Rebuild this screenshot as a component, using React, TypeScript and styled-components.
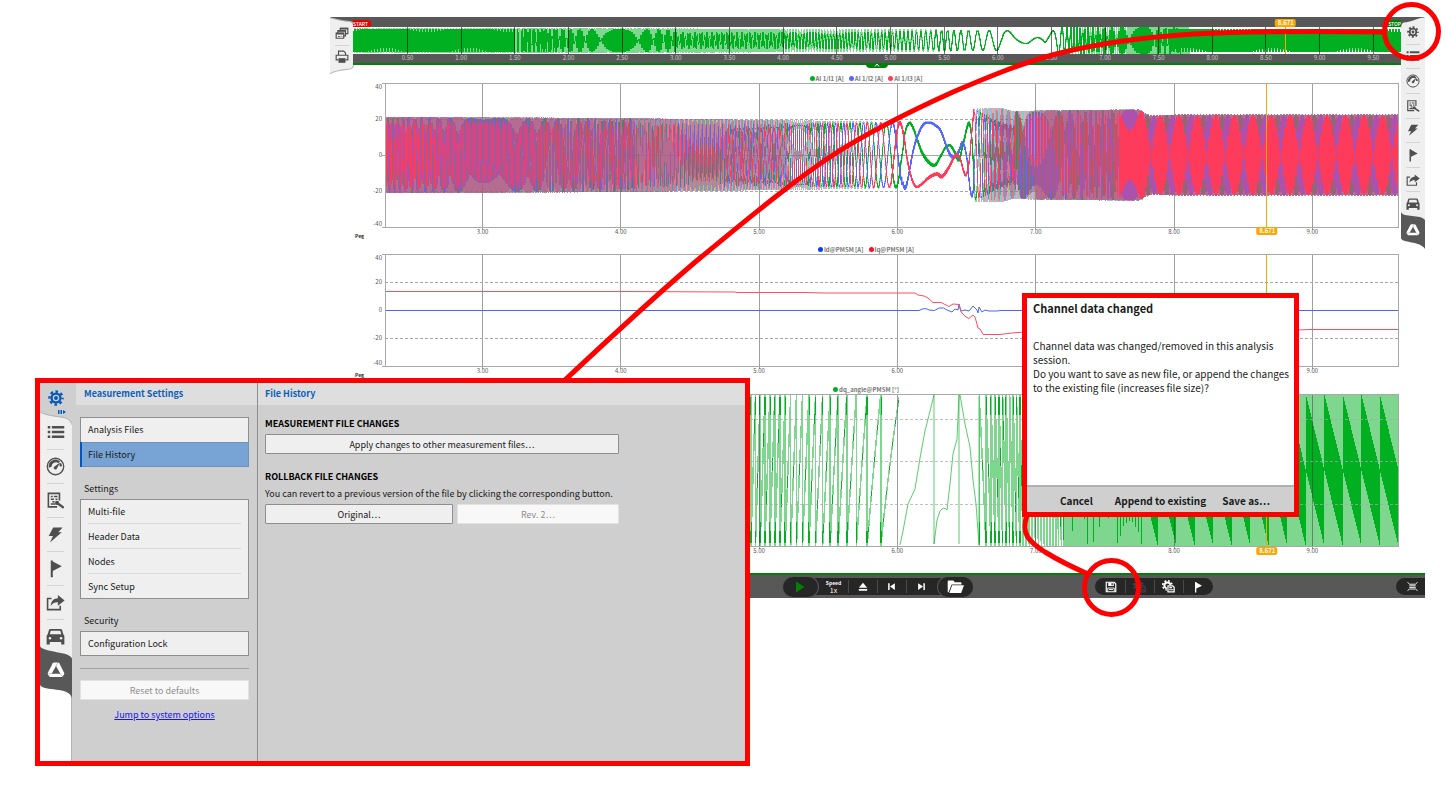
import React from "react";
import styled, { createGlobalStyle, css } from "styled-components";

const FONT = '"Noto Sans CJK SC", "Noto Sans", sans-serif';

const C = {
  red: "#ff0000",
  bar: "#585858",
  ink: "#4f4f4f",
  panel: "#cfcfcf",
  head: "#dedede",
  tile: "#efefef",
  line: "#8e8e8e",
  blue: "#0f5fbb",
  green: "#00b020",
  darkGreen: "#008008",
  cursor: "#ffa500",
  sigGreen: "#00b020",
  sigBlue: "#5468ff",
  sigRed: "#ff3b5c",
};

const GlobalStyle = createGlobalStyle`
  *, *::before, *::after { box-sizing: border-box; }
  body { margin: 0; background: #fff; font-family: ${FONT}; color: #1a1a1a; }
  button { font: inherit; color: inherit; border: 0; padding: 0; margin: 0; background: none; cursor: pointer; }
  svg { display: block; }
`;

/* ---------- signal model ---------- */

type Pt = [number, number];

const lerp = (table: Pt[], x: number) => {
  if (x <= table[0][0]) return table[0][1];
  for (let i = 1; i < table.length; i++) {
    if (x <= table[i][0]) {
      const [x0, y0] = table[i - 1];
      const [x1, y1] = table[i];
      return y0 + ((y1 - y0) * (x - x0)) / (x1 - x0);
    }
  }
  return table[table.length - 1][1];
};

const smooth = (p: Pt[], x: number) => {
  let i = 1;
  while (i < p.length - 1 && x > p[i][0]) i++;
  const a = p[Math.max(0, i - 2)];
  const b = p[i - 1];
  const c = p[i];
  const d = p[Math.min(p.length - 1, i + 1)];
  const w = c[0] - b[0];
  const u = Math.min(1, Math.max(0, (x - b[0]) / w));
  const m0 = ((c[1] - a[1]) / (c[0] - a[0])) * w;
  const m1 = ((d[1] - b[1]) / (d[0] - b[0])) * w;
  const u2 = u * u;
  const u3 = u2 * u;
  return (2 * u3 - 3 * u2 + 1) * b[1] + (u3 - 2 * u2 + u) * m0 + (3 * u2 - 2 * u3) * c[1] + (u3 - u2) * m1;
};

/* electrical frequency in Hz over time in seconds */
const FREQ: Pt[] = [
  [0, 71], [1.2, 71.5], [2.48, 53.6], [3, 46.1], [4.62, 34.6], [4.93, 30.5], [5.14, 27], [5.33, 21.8],
  [5.48, 18.7], [5.6, 16], [5.74, 12.9], [5.83, 10.1], [6, 6.1], [6.09, 4], [6.4, 4], [6.5, 6.5], [6.54, 9],
  [6.615, 20], [6.66, 28], [6.69, 33], [6.75, 38], [7, 46.1], [7.37, 53.6], [7.6, 66], [7.75, 71.9], [9.9, 71.9],
];
const DT = 0.0005;
const PHASE: number[] = [0];
for (let i = 1; i * DT < 9.95; i++) PHASE.push(PHASE[i - 1] + lerp(FREQ, i * DT) * DT);
const cyc = (t: number) => {
  const k = Math.max(0, Math.min(PHASE.length - 2, t / DT));
  const i = Math.floor(k);
  return PHASE[i] + (PHASE[i + 1] - PHASE[i]) * (k - i);
};

const T0 = 2.295;
const PER_S = 138.3;
const PLOT_W = 1013;
const timeAt = (i: number) => T0 + i / PER_S;
const colAt = (t: number) => (t - T0) * PER_S;

const AMP: Pt[] = [
  [0, 20.6], [2.3, 20.8], [4, 20.2], [4.7, 19.4], [5.5, 18.6], [6.09, 17.8], [6.5, 20], [6.56, 25.4], [6.76, 25.6],
  [6.83, 24], [7.05, 24.4], [7.75, 25], [7.79, 23], [7.83, 21.6], [8.05, 22.2], [9.9, 22.2],
];

/* slow transition through standstill: column, value in ampere */
const zt = (pts: Pt[]): Pt[] => pts.map(([x, y]) => [315 + x / 3, (315 - y) / 5.4]);
const SLOW: Pt[][] = [
  zt([[590, 412], [605, 330], [615, 250], [628, 219], [640, 235], [652, 270], [665, 305], [685, 335], [705, 345], [720, 322], [735, 295], [750, 286], [765, 308], [776, 330], [790, 280], [806, 220], [815, 260], [822, 370], [831, 455]]),
  zt([[578, 218], [590, 260], [600, 350], [613, 413], [622, 395], [640, 300], [658, 245], [672, 222], [690, 218], [705, 225], [722, 242], [740, 290], [752, 316], [765, 320], [776, 305], [788, 278], [800, 320], [810, 415], [817, 436], [826, 350], [836, 180]]),
  zt([[585, 290], [599, 213], [612, 262], [622, 330], [635, 385], [648, 410], [665, 402], [690, 380], [712, 372], [725, 380], [745, 355], [768, 314], [780, 325], [790, 360], [798, 375], [808, 330], [816, 240], [824, 178], [832, 260]]),
];

const current = (ph: number, t: number) => {
  const i = colAt(t);
  const a = lerp(AMP, t);
  if (i > 517 && i < 589) return smooth(SLOW[ph], i);
  if (t < 6.3) return a * Math.cos(2 * Math.PI * (cyc(t) - cyc(6.086) - ph / 3));
  if (t < 7.79) return a * Math.cos(2 * Math.PI * (cyc(t) - cyc(6.5156) + ph / 3));
  return a * Math.cos(2 * Math.PI * (0.527 * (i - 788.3) + (ph - 2) / 3));
};

/* Columns of a decimated signal: the light band is the min/max range, the
   solid one joins neighbouring samples. core() scales the solid part. */
const bars = (
  n: number,
  at: (i: number) => number,
  y: (v: number) => number,
  pad: (i: number) => number,
  core: (i: number) => number,
  reach: (i: number) => number,
) => {
  let solid = "";
  let light = "";
  for (let i = 0; i < n; i++) {
    let lo = Infinity;
    let hi = -Infinity;
    const r = reach(i);
    for (let k = 0; k <= 14; k++) {
      const v = at(i - r + ((1 + 2 * r) * k) / 14);
      lo = Math.min(lo, v);
      hi = Math.max(hi, v);
    }
    const s = core(i);
    const p = pad(i);
    const x = i + 0.5;
    light += `M${x} ${(y(hi) - p - 0.4).toFixed(1)}V${(y(lo) + p + 0.4).toFixed(1)}`;
    if (s > 0) {
      const a = at(i);
      const b = at(i + 1);
      const mid = (a + b) / 2;
      const half = (Math.abs(a - b) / 2) * s;
      solid += `M${x} ${(y(mid + half) - p).toFixed(1)}V${(y(mid - half) + p).toFixed(1)}`;
    }
  }
  return { solid, light };
};

const coreOf = (ph: number, i: number) => {
  const t = timeAt(i);
  if (i > 505 && i < 589) return 1;
  if (t < 2.65) return ph === 2 ? (i % 4 === 3 ? 0 : 0.85) : 1;
  if (t < 3.4) return ph === 2 ? (i % 2 === 0 ? 0.85 : 0) : 1;
  if (t < 4.1) return ph === 2 ? (i % 3 === 0 ? 0.9 : 0) : ph === 1 && i % 3 === 1 ? 0 : 1;
  if (t < 4.75) return ph === 2 ? (i % 4 === 0 ? 0.7 : 0) : ph === 1 ? (i % 4 === 1 ? 0.7 : 0) : i % 2 ? 0.8 : 0;
  if (t < 5.4) return (i + ph) % 3 === 0 ? 0.7 : 0.2;
  if (t < 6.3) return 0.6;
  if (t < 6.85) return 0.4;
  if (t < 7.6) return ph === 2 ? (i % 3 === 0 ? 0.9 : 0) : ph === 1 && i % 3 === 1 ? 0 : 1;
  return 1;
};

const PHASES = [C.sigGreen, C.sigBlue, C.sigRed].map((color, ph) => ({
  color,
  ...bars(
    PLOT_W,
    (i) => current(ph, timeAt(i)),
    (v) => 72 - v * 1.8,
    (i) => (i > 505 && i < 589 ? 1 + (Math.sin(i / 7 + ph * 2) + 1) / 3 : 0.5),
    (i) => coreOf(ph, i),
    (i) => {
      const t = timeAt(i);
      if (t < 4.4 || t > 7) return 0.6;
      return t < 5.2 ? 0.4 : 0.1;
    },
  ),
}));

const OV_W = 1048;
const ovTime = (i: number) => (i - 0.9) / 107.3;
const OVERVIEW = bars(
  OV_W,
  (i) => Math.max(-23, Math.min(23, current(0, Math.min(ovTime(i), 7.78)))),
  (v) => 13.5 - v * 0.55,
  () => 0.4,
  (i) => (ovTime(i) < 1.55 || ovTime(i) > 7.7 ? 0 : ovTime(i) > 3 && ovTime(i) < 5.4 ? 0.7 : 1),
  (i) => (ovTime(i) < 4 || ovTime(i) > 7.2 ? 0.6 : 0.1),
);
/* at both ends the samples fill the whole band, with a beating comb at the edges */
const OVERVIEW_FILL = (() => {
  let d = "";
  for (let i = 0; i < OV_W; i++) {
    const t = ovTime(i);
    if (t > 1.9 && t < 7.6) continue;
    if (t > 1.5 && t < 1.9 && i % 4 > 1) continue;
    const top = i % 3 ? 0 : 3.5 * Math.max(0, Math.cos((2 * Math.PI * (i + (t > 5 ? 45 : 10))) / 84));
    const bot = i % 3 ? 0 : 4.5 * Math.max(0, -Math.cos((2 * Math.PI * (i + (t > 5 ? 48 : 10))) / 84));
    d += `M${i + 0.5} ${(1.8 + top).toFixed(1)}V${(25.2 - bot).toFixed(1)}`;
  }
  return d;
})();

const frac = (v: number) => v - Math.floor(v);
const ANGLE = (() => {
  let light = "";
  let solid = "";
  const H = 152;
  const add = (x: number, a: number, b: number) =>
    `M${x + 0.5} ${(Math.min(a, b) * H).toFixed(1)}V${(Math.max(a, b) * H).toFixed(1)}`;
  const left = cyc(timeAt(514.7));
  const right = cyc(timeAt(594));
  const pos = (i: number) => {
    const t = timeAt(i);
    if (i < 515) return 1 - frac(cyc(t) - left);
    if (t < 7.79) return frac(cyc(t) - right);
    return frac(0.527 * (i - 920.3));
  };
  for (let i = 0; i < PLOT_W; i++) {
    if (i >= 514 && i < 594) continue;
    const t = timeAt(i);
    const r = t > 7.2 ? 0.8 : 0.25;
    let lo = 1;
    let hi = 0;
    for (let k = 0; k <= 12; k++) {
      const v = pos(i - r + ((1 + 2 * r) * k) / 12);
      lo = Math.min(lo, v);
      hi = Math.max(hi, v);
    }
    if (hi - lo > 0.6) {
      lo = 0;
      hi = 1;
    }
    light += add(i, lo, hi);
    if (t < 6.9) {
      if (hi - lo > 0.9) solid += i % 3 ? add(i, 0.02, 0.14) + add(i, 0.9, 0.98) : add(i, 0.84, 0.98);
      else if (i % 3 === 0) solid += add(i, lo * 0.65 + hi * 0.35, lo * 0.35 + hi * 0.65);
    } else if (t > 7.79) {
      const s = frac(0.027 * (i - 920.3) * 2) / 2;
      solid += add(i, s, s + 0.5);
    } else if (i % 3 === 0) solid += add(i, pos(i), pos(i + 1));
  }
  return { light, solid };
})();
const SLOW_ANGLE =
  "M515 151L518 137L523 110L530 95L535 64L540 37L549 1V150L552 126L555 117Q559 112 562 116L565 90L568 60L572 45L574 1V150M575 1L580 30L585 53L588 86L591 110L594 151V2";

/* ---------- icons ---------- */

type IconName =
  | "gear" | "list" | "gauge" | "doc" | "bolt" | "flag" | "share" | "car" | "logo"
  | "stack" | "printer" | "play" | "eject" | "prev" | "next" | "folder" | "save" | "gearSave" | "fit";

const ICONS: Record<IconName, React.ReactNode> = {
  gear: (
    <g fill="none" stroke="currentColor">
      <circle cx="12" cy="12" r="6.6" strokeWidth="3.4" />
      <circle cx="12" cy="12" r="9.8" strokeWidth="3.6" strokeDasharray="3.9 3.797" strokeDashoffset="1.95" />
      <circle cx="12" cy="12" r="2.9" fill="currentColor" stroke="none" />
    </g>
  ),
  list: (
    <path fill="currentColor" d="M1 4h3.4v3.4H1zM1 10.3h3.4v3.4H1zM1 16.6h3.4V20H1zM6.5 4H23v3.4H6.5zM6.5 10.3H23v3.4H6.5zM6.5 16.6H23V20H6.5z" />
  ),
  gauge: (
    <g>
      <circle cx="12" cy="12" r="10.4" fill="none" stroke="currentColor" strokeWidth="1.7" />
      <path fill="currentColor" d="M3.5 13.5A8.6 8.6 0 0 1 17.8 5.6l-2 2A5.6 5.6 0 0 0 7 12.4zM20.3 11.8a8.6 8.6 0 0 0-1.6-4.6l-1.8 2 .5 2.8zM11 15.6a2 2 0 0 1-.6-3.2L18 6.5l-4.400 8.300a2 2 0 0 1-2.600.8z" />
    </g>
  ),
  doc: (
    <g fill="none" stroke="currentColor">
      <path strokeWidth="2" d="M17 12V3H3v17h11" />
      <path strokeWidth="1.8" d="M6 7h2.500M10 7h4.500M6 10.500h4M12 10.500h2.500M6 16.500h6M8 13.500h3" />
      <path strokeWidth="2.800" strokeLinecap="round" d="M14.500 15.500l7 5" />
      <circle cx="14" cy="15" r="2.600" fill="currentColor" stroke="none" />
    </g>
  ),
  bolt: <path fill="currentColor" d="M9 3h12l-5.500 6.300H20L5 22l3.800-8H3.500z" />,
  flag: <path fill="currentColor" d="M6 2h2.600v1L20 9.300 8.600 15v8H6z" />,
  share: (
    <g>
      <path fill="none" stroke="currentColor" strokeWidth="2" d="M7 7H2v14h16v-5" />
      <path fill="currentColor" d="M6 16.500C6.500 9.500 10 6.800 15 6.600V2.500l8.500 7L15 16v-4.200c-4-.1-6.700 1.200-9 4.700z" />
    </g>
  ),
  car: (
    <path
      fill="currentColor"
      fillRule="evenodd"
      d="M5.500 2.500h13c1 0 1.500.5 1.900 1.500L22 9.500c.8.500 1.200 1.200 1.200 2.200V22h-4v-3H4.800v3h-4V11.700c0-1 .4-1.700 1.200-2.200L3.600 4c.4-1 .900-1.500 1.900-1.500zM6 4.800L4.700 9.300h14.600L18 4.800zM5 12.500a1.700 1.700 0 1 0 0 3.400 1.700 1.700 0 0 0 0-3.400zm14 0a1.700 1.700 0 1 0 0 3.400 1.700 1.700 0 0 0 0-3.400z"
    />
  ),
  logo: (
    <g>
      <path fill="#fff" d="M9.200 2h5.600c.8 0 1.200.4 1.600 1l6.400 12.500c.4.800.3 1.300 0 2l-1.500 2.600c-.5.800-1 1.100-1.800 1.100h-15c-.8 0-1.300-.3-1.800-1.100l-1.500-2.600c-.3-.7-.4-1.200 0-2L7.600 3c.4-.6.800-1 1.600-1z" />
      <path fill={C.bar} d="M12 6.600l5.800 10.300H6.200z" />
      <path stroke={C.bar} strokeWidth=".5" d="M12 7l2.500-5M17.500 16.800l3 4M6.500 16.800l-5 .6" />
    </g>
  ),
  stack: (
    <g fill="none" stroke="currentColor" strokeWidth="2">
      <path d="M2 12h13v9H2zM5 12V8h13v9h-3M9 8V4h13v9h-4" />
      <path strokeWidth="3" d="M2 13h13M5 8.500h13M9 4.500h13" />
      <path strokeWidth="1.400" d="M5 18h4M11 18h1.500" />
    </g>
  ),
  printer: (
    <g>
      <path fill="none" stroke="currentColor" strokeWidth="2" d="M6 8V2h9l3 3v3M6 17H2V9h20v8h-4" />
      <path fill="currentColor" d="M6 14h12v8H6z" />
    </g>
  ),
  play: <path fill={C.darkGreen} d="M4 1l17 11L4 23z" />,
  eject: <path fill="currentColor" d="M12 2l10 12H2zM2 17h20v4H2z" />,
  prev: <path fill="currentColor" d="M3 3h4v18H3zM21 3v18L8 12z" />,
  next: <path fill="currentColor" d="M17 3h4v18h-4zM3 3v18l13-9z" />,
  folder: <path fill="currentColor" d="M1 20V5c0-1 .5-1.600 1.500-1.600H9l2 2.600h8c1 0 1.500.6 1.500 1.500V9H6.500L2.300 20zM7.300 10.300H24L20 21H3.300z" />,
  save: (
    <g>
      <path fill="none" stroke="currentColor" strokeWidth="2.400" d="M2.500 2.500h16l3 3v16h-19z" />
      <path fill="currentColor" fillRule="evenodd" d="M6.500 3h11v7h-11zm6.500 1.500v4h2.500v-4z" />
      <path fill="none" stroke="currentColor" strokeWidth="1.800" d="M5.500 21v-7h13v7M8 17h8" />
    </g>
  ),
  gearSave: (
    <g>
      <g fill="none" stroke="currentColor">
        <circle cx="10" cy="10" r="5.500" strokeWidth="3.600" />
        <circle cx="10" cy="10" r="8.600" strokeWidth="3" strokeDasharray="3.500 3.254" />
      </g>
      <path fill="#262626" d="M9 9h15v14H9z" />
      <path fill="none" stroke="currentColor" strokeWidth="2.200" d="M11 11h9l2.500 2.500V22H11zM13 18h8M13.500 14h5" />
    </g>
  ),
  fit: (
    <g fill="none" stroke="currentColor" strokeWidth="2">
      <path d="M5 7h14M5 10.500h14M5 14h14M5 17.500h14" />
      <path strokeWidth="2" d="M1 3l4 3M23 3l-4 3M1 21l4-3M23 21l-4-3" />
    </g>
  ),
};

const Glyph = styled.svg<{ $size: number }>`
  width: ${(p) => p.$size}px;
  height: ${(p) => p.$size}px;
  flex: none;
`;
const Icon = ({ name, size }: { name: IconName; size: number }) => (
  <Glyph $size={size} viewBox="0 0 24 24" aria-hidden="true">
    {ICONS[name]}
  </Glyph>
);

/* ---------- analysis window ---------- */

const Page = styled.main`
  position: relative;
  min-height: 786px;
  padding: 17px 21px 0 330px;
  overflow: hidden;
`;

const Window = styled.section`
  display: grid;
  grid-template-columns: 23px minmax(0, 1fr) 24px;
`;

const Rail = styled.nav<{ $height: number }>`
  display: grid;
  align-self: start;
  height: ${(p) => p.$height}px;
  > * {
    grid-area: 1 / 1;
  }
`;
const RailShape = styled.svg`
  width: 100%;
  height: 100%;
`;
const RailItems = styled.div<{ $bottom: number; $top: number }>`
  display: flex;
  flex-direction: column;
  padding: ${(p) => p.$top}px 5px ${(p) => p.$bottom}px;
`;
const RailButton = styled.button<{ $last?: boolean }>`
  flex: 1;
  min-height: 0;
  display: flex;
  align-items: center;
  justify-content: center;
  color: ${C.ink};
  border-bottom: 1px solid ${(p) => (p.$last ? "transparent" : "#d4d4d4")};
`;
const LogoSpot = styled.div`
  flex: none;
  height: 25px;
  display: flex;
  align-items: center;
  justify-content: center;
`;

const Main = styled.div`
  min-width: 0;
`;

const Overview = styled.div`
  position: relative;
  background: ${C.bar};
  border-bottom: 2px solid ${C.darkGreen};
  height: 48px;
`;
const OverviewHead = styled.div`
  position: relative;
  display: flex;
  justify-content: space-between;
  align-items: flex-end;
  height: 10px;
`;
const EdgeFlag = styled.span<{ $color: string }>`
  height: 7px;
  padding: 0 3px 0 0;
  border-radius: 0 3px 3px 0;
  background: ${(p) => p.$color};
  color: #fff;
  font-size: 5px;
  line-height: 7px;
  font-weight: 500;
  & + & {
    padding: 0 0 0 3px;
    border-radius: 3px 0 0 3px;
  }
`;
const Chart = styled.svg<{ $height: number }>`
  width: 100%;
  height: ${(p) => p.$height}px;
  overflow: visible;
  font-family: ${FONT};
`;
const PullTab = styled.button`
  position: absolute;
  left: 50%;
  top: 46px;
  width: 22px;
  height: 5px;
  margin-left: -11px;
  border-radius: 0 0 4px 4px;
  background: ${C.darkGreen};
  display: flex;
  justify-content: center;
`;

const ChartBlock = styled.figure<{ $top: number }>`
  margin: 0;
  padding: ${(p) => p.$top}px 3px 0 32px;
`;
const Legend = styled.figcaption`
  display: flex;
  justify-content: center;
  gap: 5px;
  height: 9px;
  padding-right: 51px;
  font-size: 6px;
  line-height: 9px;
  font-weight: 700;
  color: #777;
`;
const LegendItem = styled.span<{ $color: string }>`
  display: flex;
  align-items: center;
  gap: 1px;
  &::before {
    content: "";
    width: 5px;
    height: 5px;
    border-radius: 50%;
    background: ${(p) => p.$color};
  }
`;

const pct = (t: number) => `${((colAt(t) / PLOT_W) * 100).toFixed(2)}%`;

const Cursor = ({ h, x, badgeY }: { h: number; x: string; badgeY?: number }) => (
  <svg x={x} y="0" overflow="visible">
    <rect x="-1" y="0" width="1" height={h} fill={C.cursor} shapeRendering="crispEdges" />
    {badgeY !== undefined && (
      <g transform={`translate(0 ${badgeY})`}>
        <rect x="-11" y="0" width="21" height="8" rx="2" fill={C.cursor} />
        <text x="0" y="6" textAnchor="middle" fontSize="6" fontWeight="700" fill="#fff">8.671</text>
      </g>
    )}
  </svg>
);

const Frame = ({ h }: { h: number }) => (
  <g stroke="#a8a8a8" shapeRendering="crispEdges" strokeWidth="1">
    <line x1="-3" x2="100%" y1="0.5" y2="0.5" />
    <line x1="-3" x2="100%" y1={h - 0.5} y2={h - 0.5} />
    <line x1="0.5" x2="0.5" y1="0" y2={h} />
    <line x1="100%" x2="100%" y1="0" y2={h} />
  </g>
);

const SECONDS = [3, 4, 5, 6, 7, 8, 9];
const TimeGrid = ({ h, color, labels = SECONDS }: { h: number; color: string; labels?: number[] }) => (
  <g>
    {SECONDS.map((t) => (
      <line key={t} x1={pct(t)} x2={pct(t)} y1="0" y2={h + 2} stroke={color} shapeRendering="crispEdges" />
    ))}
    {labels.map((t) => (
      <text key={t} x={pct(t)} y={h + 6} textAnchor="middle" fontSize="6" fill="#555">{t.toFixed(2)}</text>
    ))}
  </g>
);

const Levels = ({ ys, solid }: { ys: number[]; solid?: number }) => (
  <g stroke="#a8a8a8" shapeRendering="crispEdges">
    {ys.map((y) => (
      <line key={y} x1={y === solid ? -3 : 0} x2="100%" y1={y} y2={y} strokeDasharray={y === solid ? undefined : "3 2"} />
    ))}
  </g>
);

const Scale = ({ items, h }: { items: [string, number][]; h: number }) => (
  <g fontSize="6" fill="#555" textAnchor="end">
    {items.map(([label, y]) => (
      <text key={label} x="-3" y={y + 2}>{label}</text>
    ))}
    <text x="-21" y={h + 10} fontSize="5" fontWeight="700" fill="#222">Peg</text>
  </g>
);

const Signals = ({ h, children }: { h: number; children: React.ReactNode }) => (
  <svg width="100%" height={h} viewBox={`0 0 ${PLOT_W} ${h}`} preserveAspectRatio="none" fill="none" shapeRendering="crispEdges">
    {children}
  </svg>
);

/* ---------- transport bar ---------- */

const Transport = styled.footer`
  grid-column: 1 / -1;
  display: grid;
  grid-template-columns: minmax(0, 1fr) auto minmax(0, 1fr);
  align-items: center;
  height: 25px;
  margin-top: 26px;
  background: ${C.bar};
  border-top: 2px solid ${C.darkGreen};
  color: #fff;
`;
const Player = styled.div`
  grid-column: 2;
  display: flex;
  align-items: center;
`;
const pill = css`
  background: #262626;
  display: flex;
  align-items: center;
  justify-content: center;
`;
const RoundButton = styled.button`
  ${pill}
  position: relative;
  width: 35px;
  height: 20px;
  border-radius: 10px;
  box-shadow: 0 0 0 1px #555;
`;
const Strip = styled.div`
  ${pill}
  height: 17px;
  padding: 0 10px;
  margin: 0 -8px;
`;
const Tools = styled.div`
  grid-column: 3;
  display: flex;
  justify-content: space-between;
  padding-left: 122px;
`;
const Pill = styled.div`
  ${pill}
  height: 17px;
  padding: 0 0 0 2px;
  border-radius: 9px;
`;
const EndButton = styled.button`
  ${pill}
  width: 29px;
  height: 17px;
  padding-left: 4px;
  border-radius: 9px 0 0 9px;
`;
const BarButton = styled.button`
  display: flex;
  flex-direction: column;
  align-items: center;
  justify-content: center;
  width: 29px;
  height: 13px;
  border-right: 1px solid #4a4a4a;
  color: #fff;
  font-size: 7px;
  line-height: 8px;
  &:last-child {
    border-right: 0;
  }
  &:disabled {
    color: #444;
  }
`;
const Tiny = styled.small`
  font-size: 5px;
  line-height: 7px;
  font-weight: 700;
`;

/* ---------- settings call-out ---------- */

const Settings = styled.section`
  position: absolute;
  left: 35px;
  top: 378px;
  width: 715px;
  min-height: 388px;
  display: grid;
  grid-template-columns: 32px 186px minmax(0, 1fr);
  border: 5px solid ${C.red};
  background: ${C.panel};
  font-size: 9px;
  line-height: 14px;
`;
const SideRail = styled.nav`
  display: grid;
  align-content: start;
  background: #fff;
  border-right: 1px solid #b4b4b4;
  > * {
    grid-area: 1 / 1;
  }
`;
const SideShape = styled.svg`
  width: 32px;
  height: 320px;
`;
const SideItems = styled.div`
  display: flex;
  flex-direction: column;
`;
const SideButton = styled.button<{ $plain?: boolean; $active?: boolean }>`
  position: relative;
  height: ${(p) => (p.$active ? 33 : 34)}px;
  padding-bottom: ${(p) => (p.$active ? 3 : 2)}px;
  padding-right: 1px;
  display: flex;
  align-items: center;
  justify-content: center;
  color: ${(p) => (p.$active ? "#0558b8" : C.ink)};
  &::after {
    content: "";
    position: absolute;
    left: 7px;
    right: 8px;
    bottom: 0;
    height: ${(p) => (p.$plain || p.$active ? 0 : 1)}px;
    background: #d4d4d4;
  }
`;
const ActiveMark = styled.svg`
  position: absolute;
  right: 6px;
  bottom: 2px;
  width: 8px;
  height: 4px;
`;

const Column = styled.div<{ $divided?: boolean }>`
  border-right: ${(p) => (p.$divided ? `1px solid ${C.line}` : 0)};
`;
const Head = styled.h2<{ $inset?: boolean }>`
  margin: 0 0 0 ${(p) => (p.$inset ? 4 : 0)}px;
  height: 22px;
  padding: 0 ${(p) => (p.$inset ? 8 : 7)}px;
  background: ${C.head};
  color: ${C.blue};
  font-size: 9px;
  line-height: 21px;
  font-weight: 700;
`;
const NavBody = styled.div`
  padding: 12px 8px 0;
`;
const NavGroup = styled.div`
  outline: 1px solid ${C.line};
  outline-offset: -1px;
  background: ${C.tile};
`;
const NavItem = styled.button<{ $on?: boolean }>`
  position: relative;
  display: block;
  width: 100%;
  height: 25px;
  padding: 0 8px;
  text-align: left;
  line-height: 25px;
  background: ${(p) => (p.$on ? "#78a4d5" : "transparent")};
  box-shadow: ${(p) => (p.$on ? "inset 2px 0 0 #0558b8, inset 0 0 0 1px #6d93bd" : "none")};
  &:not(:last-child)::after {
    content: "";
    position: absolute;
    left: 8px;
    right: 8px;
    bottom: 0;
    height: 1px;
    background: #d8d8d8;
  }
  &:has(+ [aria-current])::after {
    display: none;
  }
`;
const NavLabel = styled.h3`
  margin: 15px 4px 3px;
  font-size: 9px;
  line-height: 14px;
  font-weight: 400;
`;
const Rule = styled.hr`
  border: 0;
  height: 1px;
  margin: 12px 0 11px;
  background: #a0a0a0;
`;
const PanelButton = styled.button`
  width: 100%;
  height: 20px;
  border: 1px solid ${C.line};
  border-radius: 1px;
  background: ${C.tile};
  line-height: 17px;
  &:disabled {
    background: #f8f8f8;
    border-color: #e2e2e2;
    color: #909090;
  }
`;
const JumpLink = styled.a`
  display: block;
  margin-top: 8px;
  text-align: center;
  color: #1414f0;
`;
const Content = styled.div`
  padding: 12px 0 0 7px;
  width: 361px;
`;
const Title = styled.h3`
  margin: 0;
  font-size: 9px;
  line-height: 14px;
  font-weight: 700;
  color: #000;
`;
const Note = styled.p`
  margin: 3px 0;
  white-space: nowrap;
`;
const Stack = styled.div`
  padding-top: 3px;
  margin-bottom: 16px;
`;
const Pair = styled.div`
  display: grid;
  grid-template-columns: 188px 1fr;
  gap: 4px;
`;

/* ---------- dialog call-out ---------- */

const Dialog = styled.section`
  position: absolute;
  right: 147px;
  top: 293px;
  width: 277px;
  height: 224px;
  display: flex;
  flex-direction: column;
  border: 5px solid ${C.red};
  background: #fff;
`;
const DialogTitle = styled.h2`
  margin: 0;
  padding: 1px 6px 0;
  font-size: 11px;
  line-height: 18px;
  font-weight: 700;
`;
const DialogText = styled.p`
  flex: 1;
  margin: 0;
  padding: 22px 0 0 6px;
  font-size: 10px;
  line-height: 14px;
`;
const DialogActions = styled.div`
  display: flex;
  justify-content: flex-end;
  gap: 16px;
  height: 27px;
  padding: 2px 24px 0 0;
  border-top: 2px solid #b0b0b0;
  background: ${C.panel};
  font-size: 10px;
  font-weight: 700;
  button:first-child {
    margin-right: 6px;
  }
`;

const Lines = styled.svg`
  position: absolute;
  left: 0;
  top: 0;
  width: 100%;
  height: 786px;
  pointer-events: none;
`;
const Ring = styled.div<{ $top: number; $right: number }>`
  position: absolute;
  top: ${(p) => p.$top}px;
  right: ${(p) => p.$right}px;
  width: 59px;
  height: 59px;
  border: 5px solid ${C.red};
  border-radius: 50%;
  pointer-events: none;
`;

const RAIL: [IconName, string][] = [
  ["gear", "Measurement settings"], ["list", "Data channels"], ["gauge", "Instruments"], ["doc", "Report"],
  ["bolt", "Power"], ["flag", "Events"], ["share", "Export"], ["car", "Applications"],
];

export default function App() {
  return (
    <Page>
      <GlobalStyle />
      <Window>
        <Rail $height={58}>
          <RailShape viewBox="0 0 23 58" preserveAspectRatio="none">
            <path fill={C.bar} d="M0 0H23V12H16z" />
            <path fill={C.tile} stroke="#b8b8b8" d="M0 1C7 2 9 4 19 4.500Q22.500 5 22.500 9V48Q22.500 51 19 52C9 53 3 54 0 57" />
          </RailShape>
          <RailItems $top={4} $bottom={5}>
            <RailButton aria-label="Screens"><Icon name="stack" size={14} /></RailButton>
            <RailButton $last aria-label="Print"><Icon name="printer" size={14} /></RailButton>
          </RailItems>
        </Rail>

        <Main>
          <Overview>
            <OverviewHead>
              <EdgeFlag $color="#e80000">START</EdgeFlag>
              <EdgeFlag $color={C.darkGreen}>STOP</EdgeFlag>
            </OverviewHead>
            <Chart $height={27} role="img" aria-label="Recording overview">
              <rect width="100%" height="27" fill="#fff" />
              <svg width="100%" height="27" viewBox={`0 0 ${OV_W} 27`} preserveAspectRatio="none" shapeRendering="crispEdges">
                <path d={OVERVIEW.light} stroke={C.green} opacity=".5" />
                <path d={OVERVIEW.solid} stroke={C.green} />
                <path d={OVERVIEW_FILL} stroke={C.green} />
              </svg>
              {Array.from({ length: 19 }, (_, i) => {
                const t = (i + 1) / 2;
                const x = `${(((t * 107.3 + 0.9) / OV_W) * 100).toFixed(2)}%`;
                return (
                  <g key={t}>
                    <line x1={x} x2={x} y1="0" y2="27" stroke="#000" strokeOpacity=".55" shapeRendering="crispEdges" />
                    <text x={x} y="33" textAnchor="middle" fontSize="6" fill="#c8c8c8">{t.toFixed(2)}</text>
                  </g>
                );
              })}
              <Cursor h={27} x="89%" badgeY={-8} />
            </Chart>
            <PullTab aria-label="Collapse overview">
              <svg width="6" height="4" viewBox="0 0 6 4"><path d="M1 3.500L3 1l2 2.500" fill="none" stroke="#fff" /></svg>
            </PullTab>
          </Overview>

          <ChartBlock $top={9}>
            <Legend>
              <LegendItem $color={C.sigGreen}>AI 1/I1 [A]</LegendItem>
              <LegendItem $color={C.sigBlue}>AI 1/I2 [A]</LegendItem>
              <LegendItem $color={C.sigRed}>AI 1/I3 [A]</LegendItem>
            </Legend>
            <Chart $height={145} role="img" aria-label="Phase currents">
              <TimeGrid h={145} color="#a0a0a0" />
              <Levels ys={[36.5, 72.5, 108.5]} solid={72.5} />
              <Signals h={145}>
                {PHASES.map((p) => (
                  <g key={p.color} stroke={p.color}>
                    <path d={p.solid} />
                    <path d={p.light} opacity=".5" />
                  </g>
                ))}
              </Signals>
              <Frame h={145} />
              <Scale h={145} items={[["40", 4], ["20", 36], ["0", 72], ["-20", 108], ["-40", 141]]} />
              <Cursor h={145} x={pct(8.674)} badgeY={144} />
            </Chart>
          </ChartBlock>

          <ChartBlock $top={17}>
            <Legend>
              <LegendItem $color="#0a3cff">Id@PMSM [A]</LegendItem>
              <LegendItem $color="#ff0a28">Iq@PMSM [A]</LegendItem>
            </Legend>
            <Chart $height={113} role="img" aria-label="Rotor currents">
              <TimeGrid h={113} color="#a0a0a0" labels={[3, 4, 5, 6, 9]} />
              <Levels ys={[28.5, 84.5]} />
              <svg width="100%" height="113" viewBox="0 0 1013 113" preserveAspectRatio="none" fill="none">
                <path
                  stroke="#4468f5"
                  d="M0 56.500H534Q540 53 544 56Q550 58 554 54Q559 53 562 56L567 58L570 55L573 56L574 50L576 57L580 56L584 57L588 52L592 56L593 59L594 53L597 58L600 56L604 57H612L616 56.500H1013"
                />
                <path
                  stroke="#ff4d62"
                  d="M0 37.500H240L350 38L352 38.500H420L440 39H530L533 41L539 42L543 44L548 48.500H556L560 50.500L564 52.500L568 50L574 50.500L576 58L581 63L584 64.500L588 61L590 63L593 74L595 75L598 80.500H615L627 79L640 78L900 76.500L925 75.500H1013"
                />
              </svg>
              <Frame h={113} />
              <Scale h={113} items={[["40", 4], ["20", 28], ["0", 56], ["-20", 84], ["-40", 109]]} />
              <Cursor h={113} x={pct(8.674)} />
            </Chart>
          </ChartBlock>

          <ChartBlock $top={18}>
            <Legend>
              <LegendItem $color={C.green}>dq_angle@PMSM [°]</LegendItem>
            </Legend>
            <Chart $height={153} role="img" aria-label="Rotor angle">
              <Signals h={153}>
                <path d={ANGLE.light} stroke={C.green} opacity=".5" />
                <path d={ANGLE.solid} stroke={C.green} />
                <path d={SLOW_ANGLE} stroke={C.green} strokeOpacity=".65" shapeRendering="auto" />
              </Signals>
              <TimeGrid h={153} color="rgba(60,60,60,.5)" />
              <g opacity=".7"><Levels ys={[25.5, 67.5, 110.5]} /></g>
              <Frame h={153} />
              <Cursor h={153} x={pct(8.674)} badgeY={153} />
            </Chart>
          </ChartBlock>
        </Main>

        <Rail $height={232}>
          <RailShape viewBox="0 0 24 232" preserveAspectRatio="none">
            <path fill={C.bar} d="M0 0H24L8 12H0z" />
            <path fill={C.tile} d="M0 205V12Q0 6 3 5.500C14 4 15 1 24 .500V212H0z" />
            <path fill={C.bar} d="M0 195C2 201 20 197 24 203V232C20 224 0 226 0 221z" />
          </RailShape>
          <RailItems $top={3} $bottom={7}>
            {RAIL.map(([name, label], i) => (
              <RailButton key={name} $last={i === 7} aria-label={label}>
                <Icon name={name} size={name === "gear" ? 12 : 14} />
              </RailButton>
            ))}
            <LogoSpot><Icon name="logo" size={14} /></LogoSpot>
          </RailItems>
        </Rail>

        <Transport>
          <Player>
            <RoundButton aria-label="Play"><Icon name="play" size={12} /></RoundButton>
            <Strip>
              <BarButton aria-label="Speed 1x"><Tiny>Speed</Tiny>1x</BarButton>
              <BarButton aria-label="Eject"><Icon name="eject" size={10} /></BarButton>
              <BarButton aria-label="Previous"><Icon name="prev" size={9} /></BarButton>
              <BarButton aria-label="Next"><Icon name="next" size={9} /></BarButton>
            </Strip>
            <RoundButton aria-label="Open file"><Icon name="folder" size={17} /></RoundButton>
          </Player>
          <Tools>
            <Pill>
              <BarButton aria-label="Save"><Icon name="save" size={12} /></BarButton>
              <BarButton aria-label="Store setup" disabled><Icon name="gearSave" size={13} /></BarButton>
              <BarButton aria-label="Save setup"><Icon name="gearSave" size={13} /></BarButton>
              <BarButton aria-label="Add marker"><Icon name="flag" size={12} /></BarButton>
            </Pill>
            <EndButton aria-label="Fit view"><Icon name="fit" size={11} /></EndButton>
          </Tools>
        </Transport>
      </Window>

      <Lines viewBox="0 0 1446 786" preserveAspectRatio="none" fill="none" stroke={C.red} strokeWidth="5">
        <path d="M565 380C612 336 656 295 700 258C744 222 789 184 833 155C873 129 913 110 953 92C988 77 1024 62 1060 53C1104 42 1148 37 1193 34C1256 31 1320 31 1386 32" />
        <path d="M1027 515C1021 534 1028 541 1045 552C1058 560 1072 567 1088 574" />
      </Lines>
      <Ring $top={2} $right={5} />
      <Ring $top={558} $right={305} />

      <Settings aria-label="Measurement Settings">
        <SideRail>
          <SideShape viewBox="0 0 32 320">
            <path fill={C.tile} d="M0 0H32V275H0z" />
            <path fill={C.panel} stroke="#b0b0b0" d="M-1 -1H33V44Q31 36 24 34.500C14 33 3 32 -1 28z" />
            <path fill={C.bar} d="M0 263C3 270 31 268 32 276V315C29 303 4 309 0 302z" />
          </SideShape>
          <SideItems>
            {RAIL.map(([name, label], i) => (
              <SideButton key={name} $active={i === 0} $plain={i === 7} aria-label={label}>
                <Icon name={name} size={name === "gear" ? 16 : name === "list" ? 18 : 19} />
                {i === 0 && (
                  <ActiveMark viewBox="0 0 8 4"><path fill="#0558b8" d="M0 0h1.500v4H0zM2.500 0H4v4H2.500zM5 0l3 2-3 2z" /></ActiveMark>
                )}
              </SideButton>
            ))}
            <SideButton $plain aria-label="System"><Icon name="logo" size={18} /></SideButton>
          </SideItems>
        </SideRail>

        <Column $divided>
          <Head $inset>Measurement Settings</Head>
          <NavBody>
            <NavGroup>
              <NavItem>Analysis Files</NavItem>
              <NavItem $on aria-current="page">File History</NavItem>
            </NavGroup>
            <NavLabel>Settings</NavLabel>
            <NavGroup>
              <NavItem>Multi-file</NavItem>
              <NavItem>Header Data</NavItem>
              <NavItem>Nodes</NavItem>
              <NavItem>Sync Setup</NavItem>
            </NavGroup>
            <NavLabel>Security</NavLabel>
            <NavGroup>
              <NavItem>Configuration Lock</NavItem>
            </NavGroup>
            <Rule />
            <PanelButton disabled>Reset to defaults</PanelButton>
            <JumpLink href="#system-options">Jump to system options</JumpLink>
          </NavBody>
        </Column>

        <Column>
          <Head>File History</Head>
          <Content>
            <Title>MEASUREMENT FILE CHANGES</Title>
            <Stack><PanelButton>Apply changes to other measurement files…</PanelButton></Stack>
            <Title>ROLLBACK FILE CHANGES</Title>
            <Note>You can revert to a previous version of the file by clicking the corresponding button.</Note>
            <Pair>
              <PanelButton>Original…</PanelButton>
              <PanelButton disabled>Rev. 2…</PanelButton>
            </Pair>
          </Content>
        </Column>
      </Settings>

      <Dialog role="dialog" aria-labelledby="dialog-title">
        <DialogTitle id="dialog-title">Channel data changed</DialogTitle>
        <DialogText>
          Channel data was changed/removed in this analysis session.
          <br />
          Do you want to save as new file, or append the changes to the existing file (increases file size)?
        </DialogText>
        <DialogActions>
          <button>Cancel</button>
          <button>Append to existing</button>
          <button>Save as…</button>
        </DialogActions>
      </Dialog>
    </Page>
  );
}
